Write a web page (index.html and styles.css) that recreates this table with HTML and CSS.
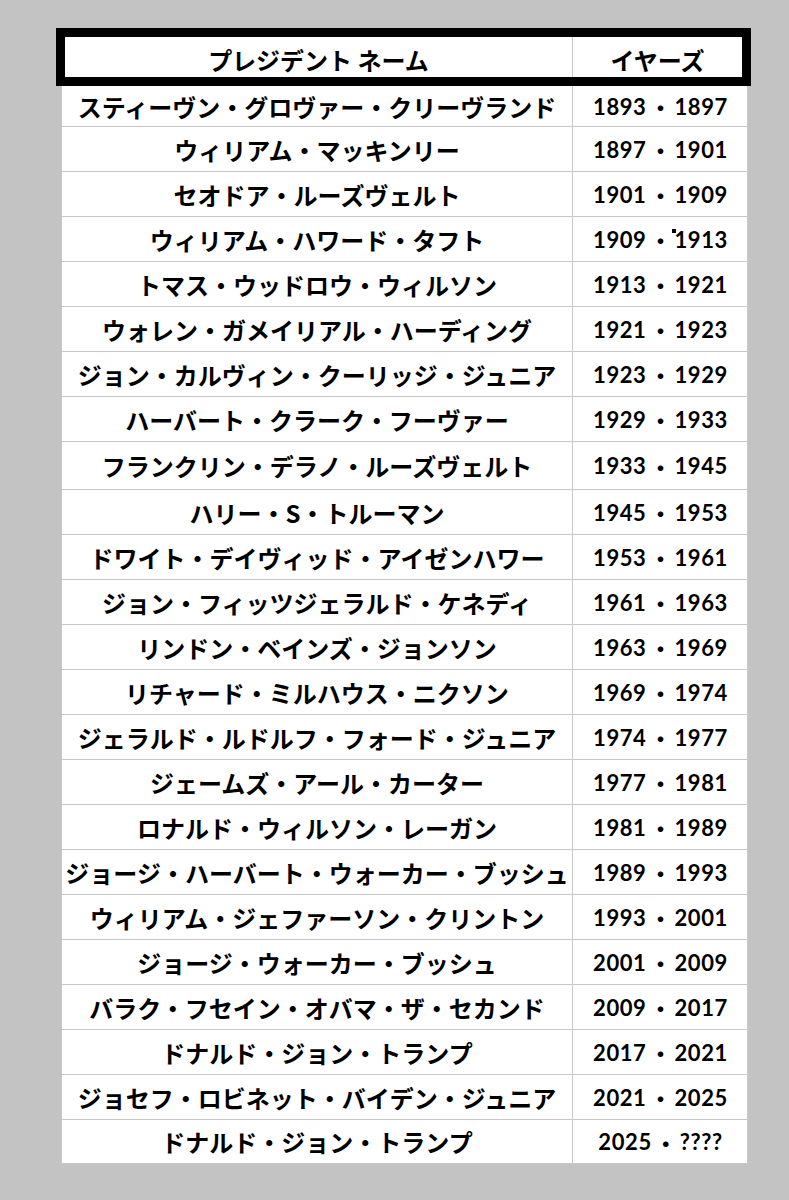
FILE: index.html
```html
<!DOCTYPE html>
<html lang="ja">
<head>
<meta charset="utf-8">
<title>プレジデント</title>
<link rel="stylesheet" href="styles.css">
</head>
<body>
<div class="table">
  <div class="head">
    <div class="hcell name">プレジデント ネーム</div>
    <div class="hcell years">イヤーズ</div>
  </div>
  <div class="row first"><div class="cell name">スティーヴン・グロヴァー・クリーヴランド</div><div class="cell years">1893<span class="sep">・</span>1897</div></div>
  <div class="row"><div class="cell name">ウィリアム・マッキンリー</div><div class="cell years">1897<span class="sep">・</span>1901</div></div>
  <div class="row"><div class="cell name">セオドア・ルーズヴェルト</div><div class="cell years">1901<span class="sep">・</span>1909</div></div>
  <div class="row"><div class="cell name">ウィリアム・ハワード・タフト</div><div class="cell years">1909<span class="sep">・</span>1913<span class="glitch"></span></div></div>
  <div class="row"><div class="cell name">トマス・ウッドロウ・ウィルソン</div><div class="cell years">1913<span class="sep">・</span>1921</div></div>
  <div class="row"><div class="cell name">ウォレン・ガメイリアル・ハーディング</div><div class="cell years">1921<span class="sep">・</span>1923</div></div>
  <div class="row"><div class="cell name">ジョン・カルヴィン・クーリッジ・ジュニア</div><div class="cell years">1923<span class="sep">・</span>1929</div></div>
  <div class="row"><div class="cell name">ハーバート・クラーク・フーヴァー</div><div class="cell years">1929<span class="sep">・</span>1933</div></div>
  <div class="row tall"><div class="cell name">フランクリン・デラノ・ルーズヴェルト</div><div class="cell years">1933<span class="sep">・</span>1945</div></div>
  <div class="row"><div class="cell name">ハリー・S・トルーマン</div><div class="cell years">1945<span class="sep">・</span>1953</div></div>
  <div class="row"><div class="cell name">ドワイト・デイヴィッド・アイゼンハワー</div><div class="cell years">1953<span class="sep">・</span>1961</div></div>
  <div class="row"><div class="cell name">ジョン・フィッツジェラルド・ケネディ</div><div class="cell years">1961<span class="sep">・</span>1963</div></div>
  <div class="row"><div class="cell name">リンドン・ベインズ・ジョンソン</div><div class="cell years">1963<span class="sep">・</span>1969</div></div>
  <div class="row"><div class="cell name">リチャード・ミルハウス・ニクソン</div><div class="cell years">1969<span class="sep">・</span>1974</div></div>
  <div class="row"><div class="cell name">ジェラルド・ルドルフ・フォード・ジュニア</div><div class="cell years">1974<span class="sep">・</span>1977</div></div>
  <div class="row"><div class="cell name">ジェームズ・アール・カーター</div><div class="cell years">1977<span class="sep">・</span>1981</div></div>
  <div class="row"><div class="cell name">ロナルド・ウィルソン・レーガン</div><div class="cell years">1981<span class="sep">・</span>1989</div></div>
  <div class="row"><div class="cell name">ジョージ・ハーバート・ウォーカー・ブッシュ</div><div class="cell years">1989<span class="sep">・</span>1993</div></div>
  <div class="row"><div class="cell name">ウィリアム・ジェファーソン・クリントン</div><div class="cell years">1993<span class="sep">・</span>2001</div></div>
  <div class="row"><div class="cell name">ジョージ・ウォーカー・ブッシュ</div><div class="cell years">2001<span class="sep">・</span>2009</div></div>
  <div class="row"><div class="cell name">バラク・フセイン・オバマ・ザ・セカンド</div><div class="cell years">2009<span class="sep">・</span>2017</div></div>
  <div class="row"><div class="cell name">ドナルド・ジョン・トランプ</div><div class="cell years">2017<span class="sep">・</span>2021</div></div>
  <div class="row"><div class="cell name">ジョセフ・ロビネット・バイデン・ジュニア</div><div class="cell years">2021<span class="sep">・</span>2025</div></div>
  <div class="row last"><div class="cell name">ドナルド・ジョン・トランプ</div><div class="cell years">2025<span class="sep">・</span>????</div></div>
</div>
</body>
</html>
```

FILE: styles.css
```css
html, body {
  margin: 0;
  padding: 0;
  background: #c3c3c3;
}

body {
  font-family: "Noto Sans CJK JP", sans-serif;
  font-weight: 700;
  color: #000;
}

.table {
  margin: 28px 0 0 61px;
  width: 685px;
  background: #fff;
  border-left: 1px solid #c8c8c8;
  border-right: 1px solid #c8c8c8;
}

.head {
  display: grid;
  grid-template-columns: 508px 169px;
  height: 40px;
  border: 9px solid #000;
  margin: 0 -4px 0 -6px;
  background: #fff;
}

.hcell {
  display: flex;
  align-items: center;
  justify-content: center;
  font-size: 24px;
  padding-top: 4px;
}

.hcell.name {
  border-right: 1px solid #c8c8c8;
}

.row {
  display: grid;
  grid-template-columns: 511px 174px;
  height: 44px;
  border-bottom: 1px solid #c8c8c8;
}

.row.first {
  height: 40px;
}

.row.tall {
  height: 47px;
}

.row.last {
  height: 43px;
}

.cell {
  position: relative;
  display: flex;
  align-items: center;
  justify-content: center;
  white-space: nowrap;
}

.cell.name {
  border-right: 1px solid #c8c8c8;
  font-size: 24px;
}

.cell.years {
  font-family: "Lato", "Noto Sans CJK JP", sans-serif;
  font-size: 22px;
  letter-spacing: 0.6px;
  padding-left: 1px;
}

.sep {
  font-family: "Noto Sans CJK JP", sans-serif;
  margin: 0 3px;
  letter-spacing: 0;
}

.glitch {
  position: absolute;
  left: 99px;
  top: 12px;
  width: 4px;
  height: 4px;
  background: #000;
}
```
